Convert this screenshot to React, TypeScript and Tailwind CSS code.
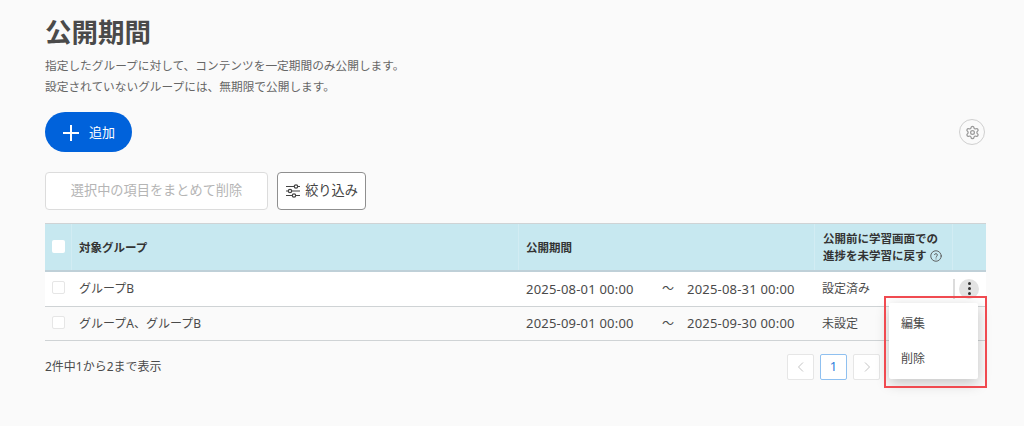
import React from "react";

function Check({ header }: { header?: boolean }) {
  return (
    <span
      className={
        header
          ? "block w-[13px] h-[13px] bg-white rounded-[2px]"
          : "block w-[13px] h-[13px] bg-white border border-[#e6e6e6] rounded-[2px]"
      }
    />
  );
}

function Row({ group, from, to, state, bg, menu }: { group: string; from: string; to: string; state: string; bg: string; menu?: boolean }) {
  return (
    <div className={`flex h-[34.5px] items-center border-b border-[#cfd3d5] text-[12px] text-[#4a4a4a] ${bg}`}>
      <div className="w-[27px] pl-[7px] flex items-center -mt-[2px]">
        <Check />
      </div>
      <div className="w-[447px] pl-[7px] pt-[1px]">{group}</div>
      <div className="w-[296px] pl-[7px] pt-[1px] flex items-center">
        <span className="w-[136px] text-[13px] tracking-[0.2px]">{from}</span>
        <span className="w-[25px]">～</span>
        <span className="text-[13px] tracking-[0.2px]">{to}</span>
      </div>
      <div className="w-[138px] pl-[7px] pt-[1px]">{state}</div>
      <div className="w-[33px] flex items-center h-full">
        {menu && (
          <div className="flex items-center h-[20px] w-full border-l-2 border-[#dcdcdc]">
            <span className="ml-[4px] w-[20px] h-[20px] rounded-full bg-[#e3e3e3] flex flex-col items-center justify-center gap-[2px]">
              <i className="block w-[3px] h-[3px] rounded-full bg-[#333]" />
              <i className="block w-[3px] h-[3px] rounded-full bg-[#333]" />
              <i className="block w-[3px] h-[3px] rounded-full bg-[#333]" />
            </span>
          </div>
        )}
      </div>
    </div>
  );
}

function PageBtn({ children, active }: { children: React.ReactNode; active?: boolean }) {
  return (
    <span
      className={
        active
          ? "w-[27px] h-[26px] flex items-center justify-center bg-white border border-[#8fc0f0] rounded-[2px] text-[#2f7fdc] text-[13px]"
          : "w-[27px] h-[26px] flex items-center justify-center bg-white border border-[#e6e6e6] rounded-[2px] text-[#c4c4c4]"
      }
    >
      {children}
    </span>
  );
}

export default function App() {
  return (
    <div className="relative w-[1024px] h-[426px] overflow-hidden bg-[#fafafa] pl-[45px] font-['Noto_Sans','Noto_Sans_CJK_JP',sans-serif]">
      <h1 className="pt-[13px] text-[26.5px] leading-[38px] font-bold text-[#4a4a4a]">公開期間</h1>
      <p className="mt-[4px] text-[11.7px] leading-[21px] text-[#666]">指定したグループに対して、コンテンツを一定期間のみ公開します。</p>
      <p className="text-[11.7px] leading-[21px] text-[#666]">設定されていないグループには、無期限で公開します。</p>

      <div className="mt-[15px] w-[941px] flex items-center justify-between">
        <button className="w-[87px] h-[40px] rounded-full bg-[#0062db] text-white flex items-center pl-[18px] gap-[10px] text-[13px]">
          <svg width="16" height="16" viewBox="0 0 16 16" fill="none" stroke="currentColor" strokeWidth="2" className="mt-[1px]">
            <path d="M8 0v16M0 8h16" />
          </svg>
          <span className="mt-[1px]">追加</span>
        </button>
        <span className="mr-[1px] w-[26px] h-[26px] rounded-full border border-[#cfcfcf] flex items-center justify-center text-[#9a9a9a]">
          <svg width="15" height="15" viewBox="0 0 24 24" fill="none" stroke="currentColor" strokeWidth="2" strokeLinecap="round" strokeLinejoin="round">
            <path d="M9.671 4.136a2.34 2.34 0 0 1 4.659 0 2.34 2.34 0 0 0 3.319 1.915 2.34 2.34 0 0 1 2.33 4.033 2.34 2.34 0 0 0 0 3.831 2.34 2.34 0 0 1-2.33 4.033 2.34 2.34 0 0 0-3.319 1.915 2.34 2.34 0 0 1-4.659 0 2.34 2.34 0 0 0-3.32-1.915 2.34 2.34 0 0 1-2.33-4.033 2.34 2.34 0 0 0 0-3.831A2.34 2.34 0 0 1 6.35 6.051a2.34 2.34 0 0 0 3.319-1.915" />
            <circle cx="12" cy="12" r="3" />
          </svg>
        </span>
      </div>

      <div className="mt-[20px] flex gap-[9px]">
        <button className="w-[223px] h-[38px] bg-white border border-[#dcdcdc] rounded-[4px] text-[13.2px] text-[#b5b5b5]">選択中の項目をまとめて削除</button>
        <button className="w-[89px] h-[38px] bg-white border border-[#8f8f8f] rounded-[4px] text-[13.2px] text-[#444] flex items-center justify-center gap-[4px]">
          <svg width="16" height="16" viewBox="0 0 16 16" fill="none" stroke="currentColor" strokeWidth="1.2">
            <path d="M1 3.5h8M13 3.5h2M1 8h2M7 8h8M1 12.5h6M11 12.5h4" />
            <circle cx="11" cy="3.5" r="1.7" />
            <circle cx="5" cy="8" r="1.7" />
            <circle cx="9" cy="12.5" r="1.7" />
          </svg>
          絞り込み
        </button>
      </div>

      <div className="mt-[13px] w-[941px]">
        <div className="flex h-[49px] items-center bg-[#c7e8f0] border-t border-b-2 border-t-[#cfd3d5] border-b-[#bfd0d8] text-[11.5px] font-bold text-[#333]">
          <div className="w-[27px] h-full pl-[7px] flex items-center border-r border-[#d2ecf3] pb-[2px]">
            <Check header />
          </div>
          <div className="w-[447px] h-full pl-[7px] pt-[2px] flex items-center border-r border-[#d2ecf3]">対象グループ</div>
          <div className="w-[296px] h-full pl-[7px] pt-[2px] flex items-center border-r border-[#d2ecf3]">公開期間</div>
          <div className="w-[138px] h-full pl-[8px] flex items-center border-r border-[#d2ecf3] leading-[17px]">
            <span>
              公開前に学習画面での
              <br />
              進捗を未学習に戻す
              <svg className="inline-block ml-[3px] -mt-[2px]" width="12" height="12" viewBox="0 0 24 24" fill="none" stroke="#555" strokeWidth="1.8" strokeLinecap="round">
                <circle cx="12" cy="12" r="10.5" />
                <path d="M9 9.2a3 3 0 0 1 5.8 1c0 2-2.8 2.4-2.8 4.3M12 17.8v.2" />
              </svg>
            </span>
          </div>
          <div className="w-[33px]" />
        </div>
        <Row group="グループB" from="2025-08-01 00:00" to="2025-08-31 00:00" state="設定済み" bg="bg-white" menu />
        <Row group="グループA、グループB" from="2025-09-01 00:00" to="2025-09-30 00:00" state="未設定" bg="bg-[#fafafa]" />
      </div>

      <div className="mt-[13px] flex items-center h-[26px] text-[12px] text-[#4a4a4a] w-[941px]">
        <span>2件中1から2まで表示</span>
        <div className="ml-auto mr-[106px] flex gap-[6px]">
          <PageBtn>
            <svg width="10" height="12" viewBox="0 0 10 12" fill="none" stroke="currentColor" strokeWidth="1"><path d="M7 1.5 2.5 6 7 10.5" /></svg>
          </PageBtn>
          <PageBtn active>1</PageBtn>
          <PageBtn>
            <svg width="10" height="12" viewBox="0 0 10 12" fill="none" stroke="currentColor" strokeWidth="1"><path d="M3 1.5 7.5 6 3 10.5" /></svg>
          </PageBtn>
        </div>
      </div>

      <div className="absolute left-[889px] top-[303px] w-[89px] h-[76px] bg-white rounded-[2px] shadow-[0_4px_14px_rgba(0,0,0,0.22)] text-[12px] text-[#4a4a4a] flex flex-col justify-center gap-[17px] pl-[12px]">
        <span className="leading-[18px]">編集</span>
        <span className="leading-[18px]">削除</span>
      </div>
      <div className="absolute left-[884px] top-[296px] w-[103px] h-[92px] border-2 border-[#f04a50]" />
    </div>
  );
}
